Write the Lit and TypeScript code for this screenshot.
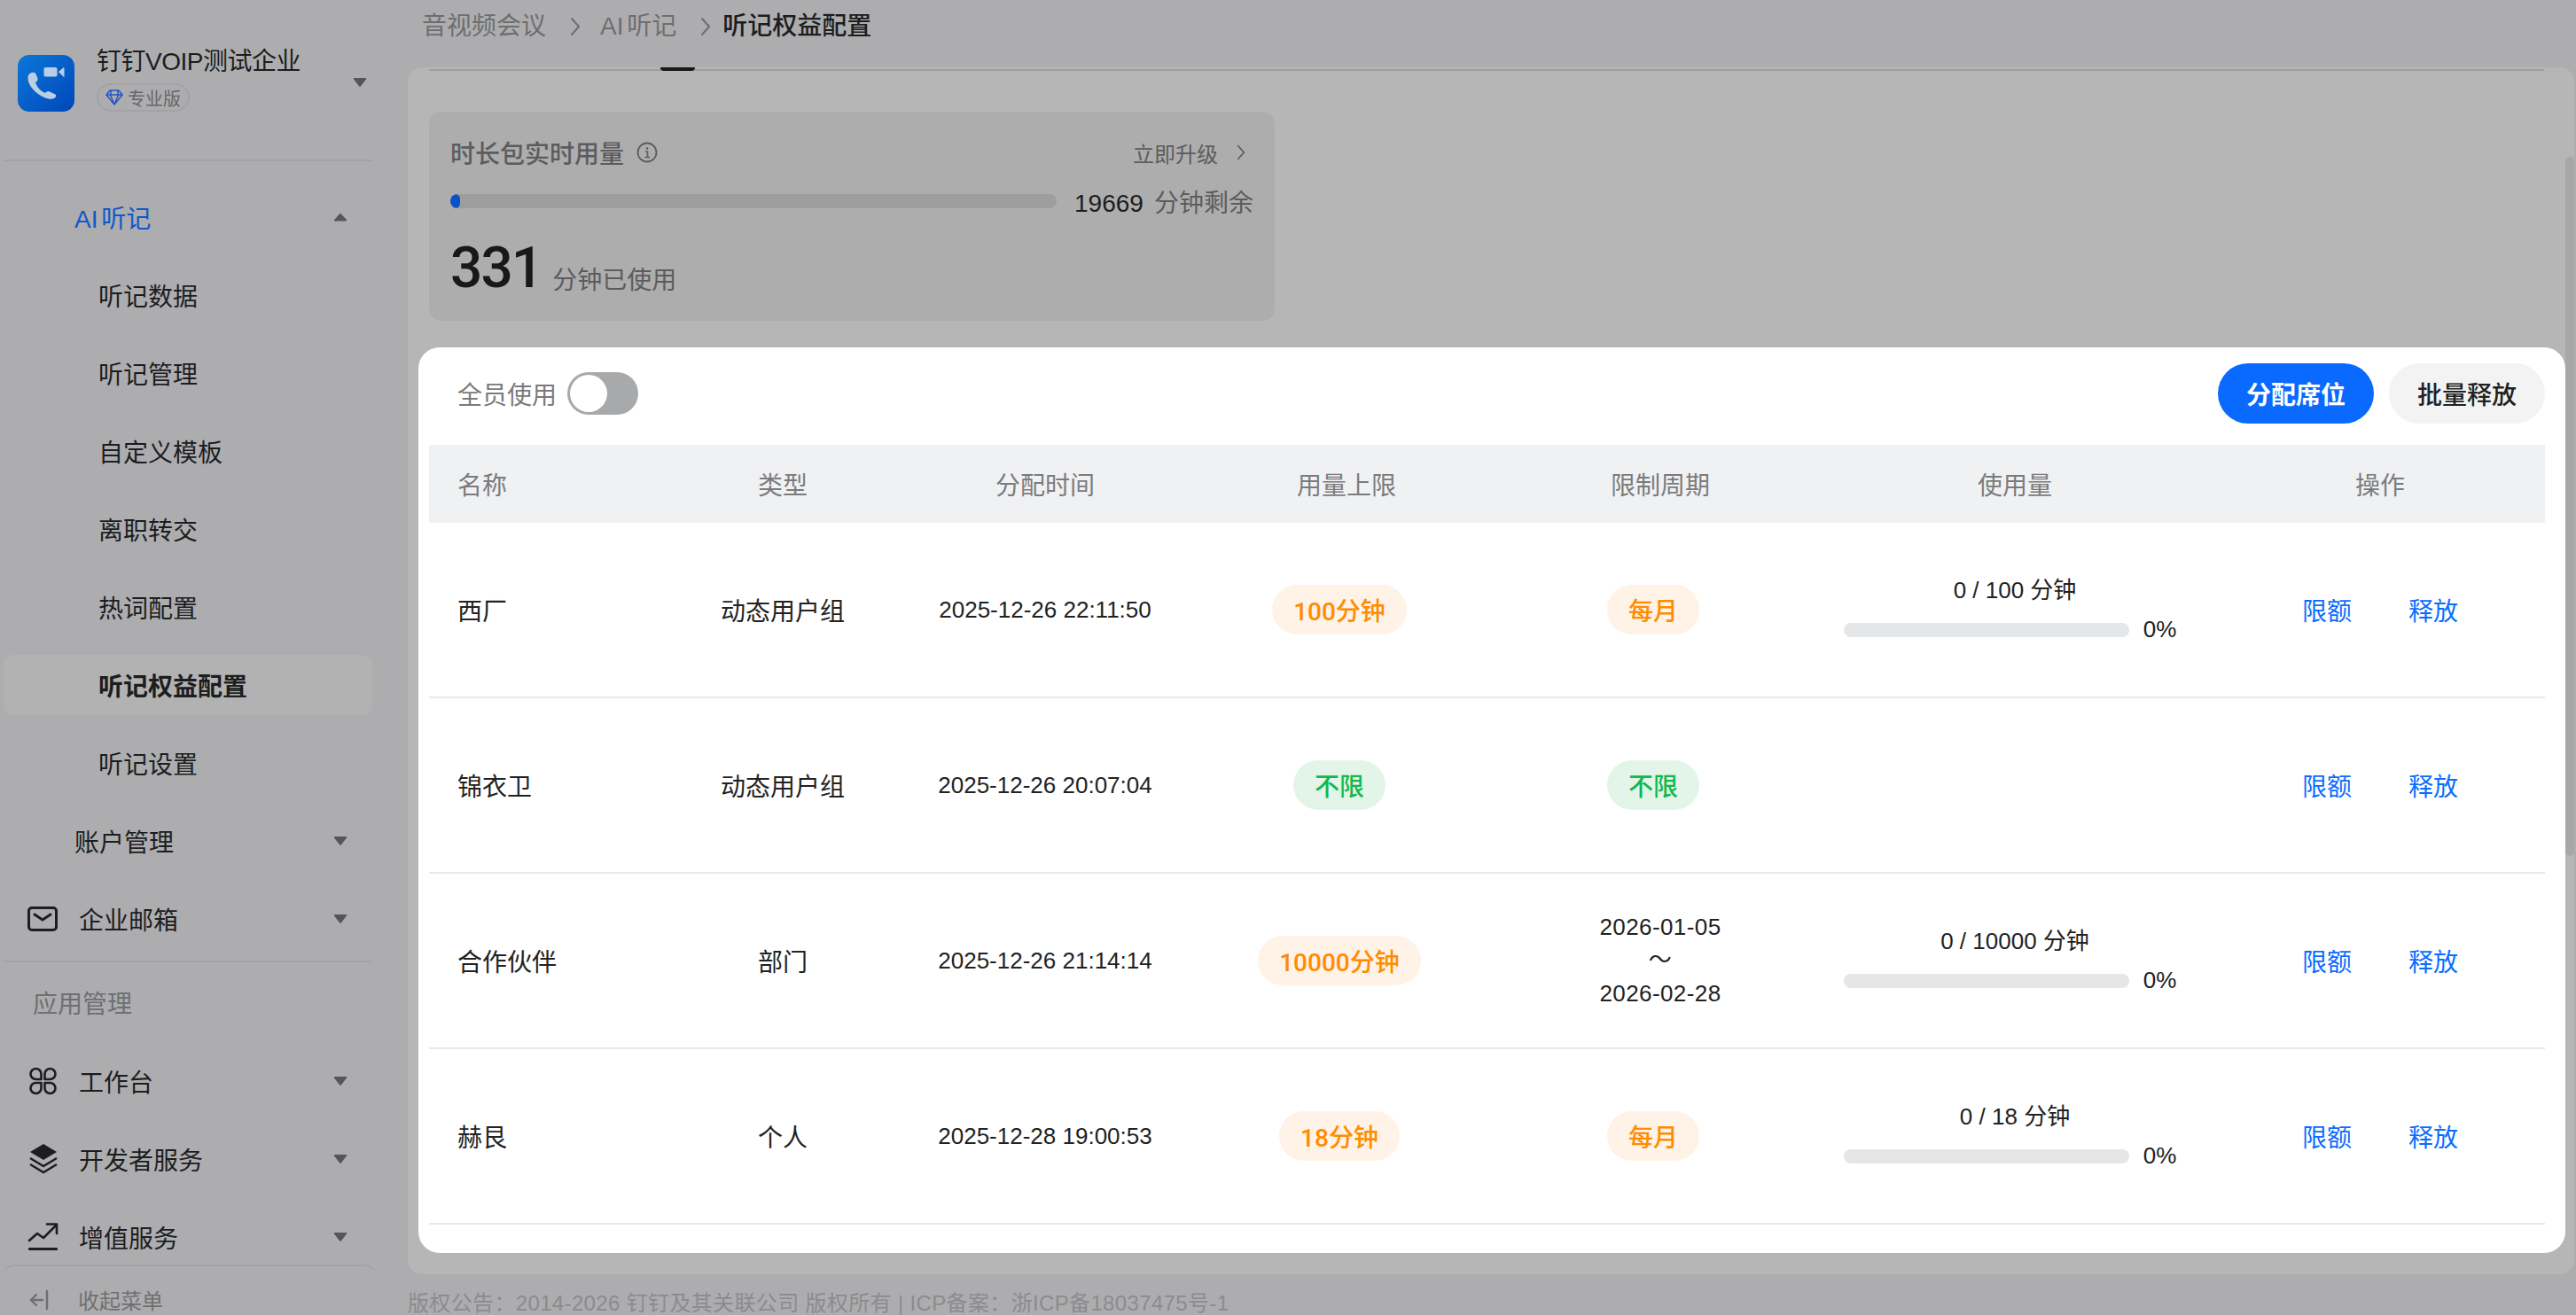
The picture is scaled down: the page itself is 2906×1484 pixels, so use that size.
import { LitElement, html, css, svg } from 'lit';
import { customElement } from 'lit/decorators.js';

const chevron = (cls = '') => html`<svg class="chev ${cls}" viewBox="0 0 12 24"><path d="M2 3 L10 12 L2 21" fill="none" stroke="currentColor" stroke-width="2" stroke-linecap="round" stroke-linejoin="round"/></svg>`;
const caret = (up = false) => html`<svg class="caret" viewBox="0 0 16 12"><path d="${up ? 'M8 1.5 L15 9 Q15.5 10.5 14 10.5 L2 10.5 Q.5 10.5 1 9 Z' : 'M1.6 1 L14.4 1 Q15.8 1 15 2.4 L9 10.2 Q8 11.4 7 10.2 L1 2.4 Q.2 1 1.6 1 Z'}" fill="currentColor"/></svg>`;

const icons: Record<string, unknown> = {
  mail: svg`<rect x="2.5" y="2.5" width="31" height="25" rx="3.5" fill="none" stroke="currentColor" stroke-width="3"/><path d="M9 10 L18 16 L27 10" fill="none" stroke="currentColor" stroke-width="3" stroke-linecap="round" stroke-linejoin="round"/>`,
  grid: svg`<g fill="none" stroke="currentColor" stroke-width="2.6" stroke-linejoin="round"><path d="M14 14 H8 a6 6 0 1 1 6 -6 Z"/><path d="M18 14 V8 a6 6 0 1 1 6 6 Z"/><path d="M14 18 V24 a6 6 0 1 1 -6 -6 Z"/><path d="M18 18 H24 a6 6 0 1 1 -6 6 Z"/></g>`,
  layers: svg`<path d="M18 1 L33 10 L18 19 L3 10 Z" fill="currentColor"/><path d="M3 17 L18 26 L33 17 M3 24 L18 33 L33 24" fill="none" stroke="currentColor" stroke-width="2.4"/>`,
  chart: svg`<path d="M2 22 L11 14 L18 19 L32 5 M22 3.500 H33 V14" fill="none" stroke="currentColor" stroke-width="2.6" stroke-linecap="round" stroke-linejoin="round"/><rect x="1" y="30" width="33" height="3" rx="1" fill="currentColor"/>`,
};

interface Seat {
  name: string; type: string; time: string;
  limit: string; limitGreen?: boolean;
  period?: string; periodGreen?: boolean; range?: [string, string];
  usage?: string;
}

const seats: Seat[] = [
  { name: '西厂', type: '动态用户组', time: '2025-12-26 22:11:50', limit: '100分钟', period: '每月', usage: '0 / 100 分钟' },
  { name: '锦衣卫', type: '动态用户组', time: '2025-12-26 20:07:04', limit: '不限', limitGreen: true, period: '不限', periodGreen: true },
  { name: '合作伙伴', type: '部门', time: '2025-12-26 21:14:14', limit: '10000分钟', range: ['2026-01-05', '2026-02-28'], usage: '0 / 10000 分钟' },
  { name: '赫艮', type: '个人', time: '2025-12-28 19:00:53', limit: '18分钟', period: '每月', usage: '0 / 18 分钟' },
];

const usedMinutes = 331;
const totalMinutes = 20000;

@customElement('app-root')
export class AppRoot extends LitElement {
  static styles = css`
    :host {
      display: flex; width: 100%; height: 1484px; overflow: hidden;
      background: #adadaf; color: #1c1d1f;
      font-family: "Liberation Sans", "Noto Sans CJK SC", sans-serif; font-size: 28px;
    }
    svg { display: block; flex: none; }
    .chev { width: 12px; height: 24px; }
    .caret { width: 16px; height: 12px; color: #565658; margin-left: auto; }

    .side { width: 460px; flex: none; display: flex; flex-direction: column; height: 100%; }
    .brand { height: 180px; box-sizing: border-box; padding: 52px 46px 0 20px; display: flex; flex: none; }
    .logo { width: 64px; height: 64px; margin-top: 10px; border-radius: 13px; background: linear-gradient(135deg, #0b78d8, #0046ba); }
    .brand-text { margin-left: 25px; }
    .brand-name { line-height: 36px; white-space: nowrap; letter-spacing: -.5px; }
    .badge {
      display: inline-flex; align-items: center; gap: 5px; height: 32px; box-sizing: border-box; margin-top: 6px;
      padding: 0 8px; border: 2px solid #a3a3a5; border-radius: 16px; font-size: 20px; color: #666668;
    }
    .badge svg { width: 20px; height: 18px; color: #2456c5; }
    .brand .caret { margin-top: 35px; }
    .rule { height: 2px; background: #a3a3a5; margin: 0 40px 0 4px; flex: none; }
    .rule.mid { margin-top: 3px; }
    .nav { flex: 1; min-height: 0; overflow: hidden; padding-top: 19px; display: flex; flex-direction: column; }
    .item {
      height: 68px; flex: none; margin: 10px 40px 10px 4px; padding: 0 28px 0 80px; box-sizing: border-box;
      display: flex; align-items: center; border-radius: 12px; white-space: nowrap;
    }
    .item.sub { padding-left: 107px; }
    .item.icon { padding-left: 27px; }
    .item.icon svg.ic { width: 36px; height: 36px; margin-right: 22px; }
    .item.on { background: #b2b2b2; font-weight: 700; }
    .item.blue { color: #1057c9; word-spacing: -4px; }
    .group { height: 90px; flex: none; display: flex; align-items: center; padding-left: 37px; color: #6f6f71; }
    .collapse {
      height: 57px; box-sizing: border-box; flex: none; margin: 0 36px 0 4px; padding: 20px 0 0 28px;
      border-top: 2px solid #a3a3a5; border-radius: 12px 12px 0 0;
      display: flex; align-items: center; font-size: 24px; color: #6f6f71;
    }
    .collapse svg { width: 24px; height: 24px; margin-right: 32px; }

    .main { flex: 1; min-width: 0; display: flex; flex-direction: column; }
    .crumbs { height: 76px; flex: none; box-sizing: border-box; padding: 10px 0 0 16px; display: flex; align-items: flex-start; line-height: 40px; color: #6e6e70; }
    .crumbs .chev { margin: 8px 22px 0 27px; }
    .crumbs .ai { word-spacing: -4px; }
    .crumbs .chev.b { margin-left: 27px; margin-right: 13px; }
    .crumbs b { font-weight: 500; color: #1c1d1f; }

    .panel { height: 1362px; width: 2444px; flex: none; background: #b6b6b6; border-radius: 16px; position: relative; overflow: hidden; }
    .tabline { height: 2px; margin: 2px 34px 0 24px; background: #9d9d9f; position: relative; }
    .tabline i { position: absolute; left: 261px; top: -2px; width: 39px; height: 4px; background: #17181a; border-radius: 0 0 4px 4px; }
    .thumb { position: absolute; right: 0; top: 101px; width: 10px; height: 789px; border-radius: 5px; background: #a6a7a7; }

    .card { width: 954px; height: 236px; margin: 46px 0 0 24px; box-sizing: border-box; padding: 26px 24px 0; background: #adadad; border-radius: 14px; }
    .card-top { display: flex; align-items: center; height: 40px; }
    .card-title { font-weight: 500; color: #5c5c5e; }
    .info { width: 24px; height: 24px; margin-left: 14px; color: #5c5c5e; }
    .upgrade { margin-left: auto; display: flex; align-items: center; font-size: 24px; color: #5c5c5e; }
    .upgrade .chev { width: 10px; height: 20px; margin-left: 21px; margin-right: 9px; }
    .meter { display: flex; align-items: center; height: 40px; margin-top: 15px; }
    .track { width: 684px; height: 16px; border-radius: 8px; background: #9e9e9f; overflow: hidden; }
    .fill { height: 100%; background: #0b50c4; border-radius: 8px; }
    .left { margin-left: 20px; white-space: nowrap; }
    .left span { color: #5c5c5e; margin-left: 12px; }
    .used { display: flex; align-items: baseline; margin-top: 19px; line-height: 74px; }
    .used strong { font-family: Roboto, "Liberation Sans", sans-serif; font-size: 64px; font-weight: 500; color: #17181a; letter-spacing: -2px; }
    .used span { margin-left: 12px; color: #5c5c5e; transform: translateY(2px); }

    .sheet { width: 2422px; height: 1022px; margin: 30px 0 0 12px; box-sizing: border-box; padding-top: 18px; background: #fff; border-radius: 24px; }
    .toolbar { display: flex; align-items: center; height: 68px; padding: 0 23px 0 44px; }
    .all { color: #7a7a7c; }
    .switch { width: 80px; height: 48px; margin-left: 12px; box-sizing: border-box; padding: 3px; border-radius: 24px; background: #a8a9ab; }
    .switch i { display: block; width: 42px; height: 42px; border-radius: 50%; background: #fff; }
    .btn { width: 176px; height: 68px; border-radius: 34px; display: flex; align-items: center; justify-content: center; }
    .btn.primary { margin-left: auto; background: #0a69ff; color: #fff; font-weight: 600; }
    .btn.plain { margin-left: 17px; background: #f3f3f3; color: #222; font-weight: 500; }

    .table { margin: 24px 23px 0 12px; }
    .tr { display: grid; grid-template-columns: 263px 272px 320px 360px 348px 452px 372px; }
    .th { height: 88px; background: #f0f1f3; color: #7b7b7d; }
    .td { height: 198px; box-sizing: border-box; border-bottom: 2px solid #e9e9eb; color: #222; }
    .tr > div { display: flex; align-items: center; justify-content: center; min-width: 0; }
    .tr > div:first-child { justify-content: flex-start; padding-left: 32px; }
    .time { font-size: 26px; white-space: nowrap; }
    .pill-cell { padding-right: 16px; }
    .pill {
      height: 56px; padding: 0 24px; border-radius: 28px; display: flex; align-items: center;
      font-family: Roboto, "Noto Sans CJK SC", sans-serif; font-weight: 500;
      background: #fff2e6; color: #ff8c00; white-space: nowrap;
    }
    .pill.green { background: #e3f5e8; color: #12b84f; }
    .range { font-size: 26px; line-height: 37.5px; text-align: center; letter-spacing: .4px; }
    .tr > div.usage { flex-direction: column; font-size: 26px; }
    .usage-text { line-height: 36px; }
    .usage-bar { display: flex; align-items: center; height: 36px; margin: 9px 11px 0 0; }
    .usage-bar i { display: block; width: 322px; height: 16px; border-radius: 8px; background: #e5e6e8; margin-right: 16px; }
    .tr > div.ops { gap: 64px; color: #0a6cff; }

    .foot { padding: 21px 0 0; font-size: 24px; line-height: 24px; letter-spacing: .35px; color: #8b8b8d; white-space: nowrap; }
  `;

  private navRow(label: string, cls = '') {
    return html`<div class="item sub ${cls}">${label}</div>`;
  }

  private iconRow(label: string, icon: string, view = '0 0 36 36') {
    return html`<div class="item icon"><svg class="ic" viewBox="${view}">${icons[icon]}</svg>${label}${caret()}</div>`;
  }

  private renderSide() {
    return html`
      <aside class="side">
        <div class="brand">
          <svg class="logo" viewBox="0 0 64 64">
            <rect x="29.500" y="14" width="15" height="10.500" rx="2" fill="#b9cfe6"/>
            <path d="M46.500 19 L52 14.500 V24.500 Z" fill="#b9cfe6" stroke="#b9cfe6" stroke-linejoin="round"/>
            <path d="M13 21.500 c2-2 6.500-2.500 7.500 0 l2 5 c.5 1.500-.5 3-2.500 4.500 c1.500 5 6 10 11 12 c1-1.500 3-2.500 4.500-1.800 l6.500 3 c2 1 1 3.500-.5 4.500 c-4 2-9 1-15-2.500 C19 42.500 12 34 11.500 27 c-.2-2 .3-4 1.500-5.500z" fill="#b9cfe6"/>
          </svg>
          <div class="brand-text">
            <div class="brand-name">钉钉VOIP测试企业</div>
            <div class="badge">
              <svg viewBox="0 0 20 18"><path d="M5 1 H15 L19 6 L10 17 L1 6 Z M1 6 H19 M6.500 1 L5.500 6 L10 17 L14.500 6 L13.500 1" fill="none" stroke="currentColor" stroke-width="1.500" stroke-linejoin="round"/></svg>
              专业版
            </div>
          </div>
          ${caret()}
        </div>
        <div class="rule"></div>
        <div class="nav">
          <div class="item blue">AI 听记${caret(true)}</div>
          ${this.navRow('听记数据')}
          ${this.navRow('听记管理')}
          ${this.navRow('自定义模板')}
          ${this.navRow('离职转交')}
          ${this.navRow('热词配置')}
          ${this.navRow('听记权益配置', 'on')}
          ${this.navRow('听记设置')}
          <div class="item">账户管理${caret()}</div>
          ${this.iconRow('企业邮箱', 'mail', '1 0 36 30')}
          <div class="rule mid"></div>
          <div class="group">应用管理</div>
          ${this.iconRow('工作台', 'grid', '-1.5 -2 36 36')}
          ${this.iconRow('开发者服务', 'layers')}
          ${this.iconRow('增值服务', 'chart')}
        </div>
        <div class="collapse">
          <svg viewBox="0 0 24 24"><path d="M21 2 V22 M16 12 H3 M9 6 L3 12 L9 18" fill="none" stroke="currentColor" stroke-width="2.400" stroke-linecap="round" stroke-linejoin="round"/></svg>
          收起菜单
        </div>
      </aside>
    `;
  }

  private renderUsage(s: Seat) {
    if (!s.usage) return html`<div></div>`;
    return html`
      <div class="usage">
        <div class="usage-text">${s.usage}</div>
        <div class="usage-bar"><i></i>0%</div>
      </div>
    `;
  }

  private renderPeriod(s: Seat) {
    if (s.range) {
      return html`<div><div class="range">${s.range[0]}<br>～<br>${s.range[1]}</div></div>`;
    }
    return html`<div class="pill-cell"><span class="pill ${s.periodGreen ? 'green' : ''}">${s.period}</span></div>`;
  }

  private renderRow(s: Seat) {
    return html`
      <div class="tr td">
        <div>${s.name}</div>
        <div>${s.type}</div>
        <div class="time">${s.time}</div>
        <div class="pill-cell"><span class="pill ${s.limitGreen ? 'green' : ''}">${s.limit}</span></div>
        ${this.renderPeriod(s)}
        ${this.renderUsage(s)}
        <div class="ops"><span>限额</span><span>释放</span></div>
      </div>
    `;
  }

  render() {
    return html`
      ${this.renderSide()}
      <main class="main">
        <div class="crumbs">
          <span>音视频会议</span>${chevron()}<span class="ai">AI 听记</span>${chevron('b')}<b>听记权益配置</b>
        </div>
        <section class="panel">
          <div class="tabline"><i></i></div>
          <div class="card">
            <div class="card-top">
              <span class="card-title">时长包实时用量</span>
              <svg class="info" viewBox="0 0 24 24"><circle cx="12" cy="12" r="10.500" fill="none" stroke="currentColor" stroke-width="1.800"/><path d="M10 11 H12.500 V17.500 M9.500 17.500 H15" fill="none" stroke="currentColor" stroke-width="1.600"/><circle cx="12" cy="7.500" r="1.300" fill="currentColor"/></svg>
              <span class="upgrade">立即升级${chevron()}</span>
            </div>
            <div class="meter">
              <div class="track"><div class="fill" style="width:${(usedMinutes / totalMinutes) * 100}%"></div></div>
              <div class="left">${totalMinutes - usedMinutes}<span>分钟剩余</span></div>
            </div>
            <div class="used"><strong>${usedMinutes}</strong><span>分钟已使用</span></div>
          </div>
          <div class="sheet">
            <div class="toolbar">
              <span class="all">全员使用</span>
              <div class="switch"><i></i></div>
              <div class="btn primary">分配席位</div>
              <div class="btn plain">批量释放</div>
            </div>
            <div class="table">
              <div class="tr th">
                <div>名称</div><div>类型</div><div>分配时间</div><div>用量上限</div><div>限制周期</div><div>使用量</div><div>操作</div>
              </div>
              ${seats.map((s) => this.renderRow(s))}
            </div>
          </div>
          <div class="thumb"></div>
        </section>
        <div class="foot">版权公告：2014-2026 钉钉及其关联公司 版权所有 | ICP备案：浙ICP备18037475号-1</div>
      </main>
    `;
  }
}
